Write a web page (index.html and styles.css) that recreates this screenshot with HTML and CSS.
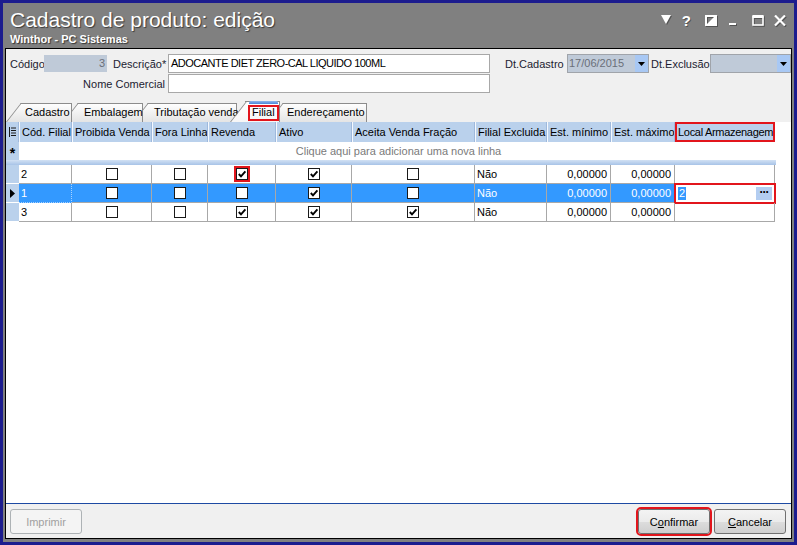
FILE: index.html
```html
<!DOCTYPE html>
<html lang="pt-BR">
<head>
<meta charset="utf-8">
<title>Cadastro de produto: edição</title>
<link rel="stylesheet" href="styles.css">
</head>
<body>
<div class="window">
  <div class="titlebar">
    <div class="titles">
      <div class="title">Cadastro de produto: edição</div>
      <div class="subtitle">Winthor - PC Sistemas</div>
    </div>
    <div class="controls">
      <svg class="ic ic-menu" width="10" height="9" viewBox="0 0 10 9"><polygon points="0,0 10,0 5,9" fill="#fff"/></svg>
      <span class="ic ic-help">?</span>
      <svg class="ic ic-restore" width="12" height="11" viewBox="0 0 12 11"><rect x="1" y="1" width="10" height="9" fill="none" stroke="#fff" stroke-width="2"/><polygon points="11,0 11,11 0,11" fill="#fff"/></svg>
      <svg class="ic ic-min" width="7" height="11" viewBox="0 0 7 11"><rect x="0" y="8" width="7" height="2" fill="#fff"/></svg>
      <svg class="ic ic-max" width="12" height="11" viewBox="0 0 12 11"><rect x="1" y="1.5" width="10" height="8.5" fill="none" stroke="#fff" stroke-width="1.6"/><rect x="0.5" y="0" width="11" height="3" fill="#fff"/></svg>
      <svg class="ic ic-close" width="12" height="11" viewBox="0 0 12 11"><path d="M1 0.5 L11 10.5 M11 0.5 L1 10.5" stroke="#fff" stroke-width="2.2"/></svg>
    </div>
  </div>

  <div class="content">
    <div class="form">
      <div class="row">
        <span class="lbl lbl-cod">Código</span>
        <div class="field in-cod">3</div>
        <span class="lbl lbl-desc">Descrição*</span>
        <div class="field in-text in-desc">ADOCANTE DIET ZERO-CAL LIQUIDO 100ML</div>
        <span class="lbl lbl-dtc">Dt.Cadastro</span>
        <div class="combo combo-dtc"><span class="combo-val">17/06/2015</span><span class="combo-btn"><svg width="7" height="4" viewBox="0 0 7 4"><polygon points="0,0 7,0 3.5,4" fill="#000"/></svg></span></div>
        <span class="lbl lbl-dte">Dt.Exclusão</span>
        <div class="combo combo-dte"><span class="combo-val"></span><span class="combo-btn"><svg width="7" height="4" viewBox="0 0 7 4"><polygon points="0,0 7,0 3.5,4" fill="#000"/></svg></span></div>
      </div>
      <div class="row row2">
        <span class="lbl lbl-nome">Nome Comercial</span>
        <div class="field in-text in-nome"></div>
      </div>
      <div class="tabs">
        <div class="tab t-cad">Cadastro</div>
        <div class="tab t-emb">Embalagem</div>
        <div class="tab t-trib">Tributação venda</div>
        <div class="tab t-fil active"><span class="redbox tab-label">Filial</span></div>
        <div class="tab t-end">Endereçamento</div>
      </div>
    </div>

    <div class="grid">
      <div class="cols ghead">
        <div class="h ind-h"><svg width="7" height="10" viewBox="0 0 7 10"><rect x="0" y="0" width="1" height="10" fill="#1a1a1a"/><rect x="2" y="0.5" width="5" height="1" fill="#1a1a1a"/><rect x="2" y="3" width="5" height="1" fill="#1a1a1a"/><rect x="2" y="5.5" width="5" height="1" fill="#1a1a1a"/><rect x="2" y="8" width="5" height="1" fill="#1a1a1a"/></svg></div>
        <div class="h">Cód. Filial</div>
        <div class="h">Proibida Venda</div>
        <div class="h">Fora Linha</div>
        <div class="h">Revenda</div>
        <div class="h">Ativo</div>
        <div class="h">Aceita Venda Fração</div>
        <div class="h">Filial Excluida</div>
        <div class="h">Est. mínimo</div>
        <div class="h">Est. máximo</div>
        <div class="h h-local redbox">Local Armazenagem</div>
      </div>

      <div class="newrow">
        <div class="ind ind-new">*</div>
        <div class="newtext">Clique aqui para adicionar uma nova linha</div>
      </div>
      <div class="sep"></div>

      <div class="cols grow">
        <div class="ind"></div>
        <div class="c">2</div>
        <div class="c ctr"><span class="cb"></span></div>
        <div class="c ctr"><span class="cb"></span></div>
        <div class="c ctr"><span class="cb on redbox-cb"><svg width="10" height="10" viewBox="0 0 10 10"><path d="M1.8 5 L4 7.4 L8.4 2.4" fill="none" stroke="#000" stroke-width="1.9"/></svg></span></div>
        <div class="c ctr"><span class="cb on"><svg width="10" height="10" viewBox="0 0 10 10"><path d="M1.8 5 L4 7.4 L8.4 2.4" fill="none" stroke="#000" stroke-width="1.9"/></svg></span></div>
        <div class="c ctr"><span class="cb"></span></div>
        <div class="c">Não</div>
        <div class="c num">0,00000</div>
        <div class="c num">0,00000</div>
        <div class="c"></div>
      </div>

      <div class="cols grow sel">
        <div class="ind"><svg width="5" height="9" viewBox="0 0 5 9"><polygon points="0,0 5,4.5 0,9" fill="#000"/></svg></div>
        <div class="c focus">1</div>
        <div class="c ctr"><span class="cb"></span></div>
        <div class="c ctr"><span class="cb"></span></div>
        <div class="c ctr"><span class="cb"></span></div>
        <div class="c ctr"><span class="cb on"><svg width="10" height="10" viewBox="0 0 10 10"><path d="M1.8 5 L4 7.4 L8.4 2.4" fill="none" stroke="#000" stroke-width="1.9"/></svg></span></div>
        <div class="c ctr"><span class="cb"></span></div>
        <div class="c">Não</div>
        <div class="c num">0,00000</div>
        <div class="c num">0,00000</div>
        <div class="c edit redbox"><span class="edit-val">2</span><span class="ellipsis">···</span></div>
      </div>

      <div class="cols grow">
        <div class="ind"></div>
        <div class="c">3</div>
        <div class="c ctr"><span class="cb"></span></div>
        <div class="c ctr"><span class="cb"></span></div>
        <div class="c ctr"><span class="cb on"><svg width="10" height="10" viewBox="0 0 10 10"><path d="M1.8 5 L4 7.4 L8.4 2.4" fill="none" stroke="#000" stroke-width="1.9"/></svg></span></div>
        <div class="c ctr"><span class="cb on"><svg width="10" height="10" viewBox="0 0 10 10"><path d="M1.8 5 L4 7.4 L8.4 2.4" fill="none" stroke="#000" stroke-width="1.9"/></svg></span></div>
        <div class="c ctr"><span class="cb on"><svg width="10" height="10" viewBox="0 0 10 10"><path d="M1.8 5 L4 7.4 L8.4 2.4" fill="none" stroke="#000" stroke-width="1.9"/></svg></span></div>
        <div class="c">Não</div>
        <div class="c num">0,00000</div>
        <div class="c num">0,00000</div>
        <div class="c"></div>
      </div>
    </div>

    <div class="footer">
      <button class="btn disabled" type="button">Imprimir</button>
      <div class="btn-group">
        <button class="btn btn-confirm" type="button">C<u>o</u>nfirmar</button>
        <button class="btn" type="button"><u>C</u>ancelar</button>
      </div>
    </div>
  </div>
</div>
</body>
</html>
```

FILE: styles.css
```css
* { box-sizing: border-box; }
html, body { margin: 0; padding: 0; }
body {
  width: 797px;
  height: 545px;
  overflow: hidden;
  font-family: "Liberation Sans", Arial, sans-serif;
  font-size: 11px;
  color: #000;
}

.window {
  width: 797px;
  height: 545px;
  border: 3px solid #1c1c8e;
  background: #808080;
  padding: 0 2px 3px 2px;
  display: flex;
  flex-direction: column;
}

/* Title bar */
.titlebar {
  height: 45px;
  flex: none;
  display: flex;
  justify-content: space-between;
  padding: 5px 6px 0 5px;
  color: #fff;
}
.title {
  font-size: 21px;
  line-height: 24px;
  text-shadow: 1px 1px 1px rgba(0, 0, 0, 0.55);
}
.subtitle {
  font-size: 11px;
  font-weight: bold;
  line-height: 13px;
  margin-top: 1px;
  text-shadow: 1px 1px 1px rgba(0, 0, 0, 0.6);
}
.controls {
  display: flex;
  align-items: flex-start;
  margin-top: 4px;
}
.ic { display: block; filter: drop-shadow(1px 1px 0 rgba(0,0,0,0.35)); }
.ic-menu { margin-top: 3px; }
.ic-help {
  margin-left: 11px;
  font-weight: bold;
  font-size: 15px;
  line-height: 17px;
  color: #fff;
  text-shadow: 1px 1px 0 rgba(0,0,0,0.35);
  filter: none;
}
.ic-restore { margin-left: 14px; margin-top: 3px; }
.ic-min { margin-left: 12px; margin-top: 3px; }
.ic-max { margin-left: 16px; margin-top: 3px; }
.ic-close { margin-left: 10px; margin-top: 3px; }

/* Content */
.content {
  flex: 1;
  border: 1px solid #000;
  background: #f0f0f0;
  display: flex;
  flex-direction: column;
  min-height: 0;
}

.form {
  height: 73px;
  flex: none;
  padding-top: 5px;
  display: flex;
  flex-direction: column;
}
.row {
  display: flex;
  align-items: center;
  height: 19px;
}
.row2 { margin-top: 1px; }
.lbl { color: #1c1c30; white-space: nowrap; }
.lbl-cod { width: 34px; margin-left: 4px; }
.field { height: 19px; line-height: 17px; white-space: nowrap; overflow: hidden; }
.in-cod {
  width: 63px;
  height: 17px;
  line-height: 17px;
  background: #bfcad8;
  color: #6a6f78;
  text-align: right;
  padding-right: 2px;
  margin-right: 6px;
}
.lbl-desc { width: 55px; }
.in-text {
  background: #fff;
  border: 1px solid #a8a8a8;
  padding-left: 2px;
}
.in-desc { width: 322px; letter-spacing: -0.5px; }
.lbl-dtc { width: 62px; margin-left: 15px; }
.combo {
  height: 19px;
  display: flex;
  background: #bfcad8;
  border: 1px solid #a0a4aa;
}
.combo-dtc { width: 82px; }
.combo-dte { width: 81px; }
.combo-val { flex: 1; padding-left: 1px; line-height: 17px; color: #6a6f78; }
.combo-btn {
  width: 13px;
  background: #a8c8f4;
  display: flex;
  align-items: center;
  justify-content: center;
}
.lbl-dte { width: 59px; margin-left: 2px; }
.lbl-nome { width: 162px; text-align: right; padding-right: 3px; }
.in-nome { width: 322px; }

/* Tabs */
.tabs {
  flex: 1;
  display: flex;
  align-items: flex-end;
  padding-left: 15px;
}
.tab {
  position: relative;
  height: 19px;
  line-height: 17px;
  padding-left: 5px;
  border-top: 1px solid #8c8c8c;
  border-right: 1px solid #8c8c8c;
  background: linear-gradient(#fefefe, #e4e4e4);
  white-space: nowrap;
  color: #000;
}
.tab::before {
  content: "";
  position: absolute;
  top: -1px;
  bottom: 0;
  left: -15px;
  width: 18px;
  border-top: 1px solid #8c8c8c;
  border-left: 1px solid #8c8c8c;
  background: linear-gradient(#fefefe, #e4e4e4);
  transform: skewX(-38deg);
  transform-origin: 0 100%;
  z-index: -1;
}
.t-cad { width: 51px; margin-right: 6px; z-index: 9; padding-left: 4px; }
.t-emb { width: 65px; margin-right: 5px; z-index: 8; padding-left: 6px; }
.t-trib { width: 89px; margin-right: 8px; z-index: 7; padding-left: 6px; }
.t-fil { width: 35px; margin-right: 3px; z-index: 20; }
.t-end { width: 84px; z-index: 5; padding-left: 4px; }
.tab.active {
  height: 21px;
  padding: 3px 0 1px 3px;
  background: linear-gradient(#ffffff, #f6f6f6);
}
.tab.active::before { background: linear-gradient(#ffffff, #f6f6f6); }
.tab.active::after {
  content: "";
  position: absolute;
  top: -1px;
  left: 4px;
  right: 1px;
  height: 3px;
  border-radius: 2px 2px 0 0;
  background: linear-gradient(#8fb8ec, #4a86d8);
}
.tab-label {
  display: block;
  height: 16px;
  line-height: 15px;
  padding: 0 4px;
}
.redbox { outline: 2px solid #e2151c; outline-offset: -2px; }

/* Grid */
.grid {
  flex: 1;
  background: #fff;
  border-bottom: 1px solid #1d4aa3;
  display: flex;
  flex-direction: column;
  min-height: 0;
}
.cols {
  display: grid;
  grid-template-columns: 13px 53px 80px 56px 68px 76px 123px 72px 64px 64px 100px;
  width: 769px;
}
.ghead { height: 20px; background: #bad1ec; }
.h {
  line-height: 20px;
  padding-left: 2px;
  white-space: nowrap;
  overflow: hidden;
  border-left: 1px solid #f5f9fe;
  box-shadow: -1px 0 0 #9fb9dc;
}
.ind-h {
  border-left: none;
  box-shadow: none;
  display: flex;
  align-items: center;
  justify-content: center;
  padding-left: 0;
}
.h-local { padding-left: 2px; letter-spacing: -0.3px; }

.newrow {
  height: 18px;
  display: flex;
}
.ind {
  background: #bad1ec;
  border-bottom: 1px solid #fff;
  display: flex;
  align-items: center;
  justify-content: center;
}
.ind-new {
  width: 13px;
  font-size: 14px;
  font-weight: bold;
  line-height: 18px;
  padding-top: 3px;
  border-bottom: none;
}
.newtext {
  flex: 1;
  text-align: center;
  line-height: 18px;
  color: #7a7a7a;
  padding-right: 13px;
}
.sep {
  height: 5px;
  width: 770px;
  flex: none;
  background: linear-gradient(#d2e1f4, #a7c3e7);
}

.grow { height: 19px; }
.c {
  border-right: 1px solid #a8a8a8;
  border-bottom: 1px solid #a8a8a8;
  line-height: 18px;
  padding: 0 2px;
  white-space: nowrap;
  overflow: hidden;
}
.c.ctr {
  display: flex;
  align-items: center;
  justify-content: center;
  padding: 0;
}
.c.num { text-align: right; padding-right: 3px; }
.cb {
  width: 12px;
  height: 12px;
  border: 1px solid #1a1a1a;
  background: #fff;
  display: block;
}
.cb svg { display: block; }
.redbox-cb { outline: 2px solid #e2151c; outline-offset: 0; }

.sel .c { background: #3399ff; color: #fff; }
.sel .c.focus { border: 1px dotted #a9d2ff; border-top: none; border-left: none; }
.sel .c.edit {
  background: #fff;
  color: #000;
  border: 1px dotted #000;
  display: flex;
  align-items: center;
  justify-content: space-between;
  padding: 0 2px 0 2px;
  outline-offset: -1px;
}
.edit-val {
  background: #3399ff;
  color: #fff;
  line-height: 13px;
  padding: 0 1px;
}
.ellipsis {
  width: 16px;
  height: 13px;
  background: #b3cdf1;
  color: #000;
  font-weight: bold;
  font-size: 12px;
  line-height: 10px;
  text-align: center;
  letter-spacing: -1px;
}

/* Footer */
.footer {
  height: 34px;
  flex: none;
  display: flex;
  justify-content: space-between;
  align-items: flex-start;
  padding: 5px 5px 0 4px;
}
.btn-group { display: flex; gap: 4px; }
.btn {
  width: 72px;
  height: 25px;
  border: 1px solid #707070;
  border-radius: 3px;
  background: linear-gradient(#f3f3f3 0%, #ebebeb 50%, #dddddd 51%, #cfcfcf 100%);
  font-family: "Liberation Sans", Arial, sans-serif;
  font-size: 11px;
  color: #000;
  padding: 0;
  display: flex;
  align-items: center;
  justify-content: center;
}
.btn.disabled {
  border-color: #adb2b5;
  background: #f4f4f4;
  color: #a0a0a0;
}
.btn-confirm { outline: 2px solid #e2151c; outline-offset: 0; }
```
